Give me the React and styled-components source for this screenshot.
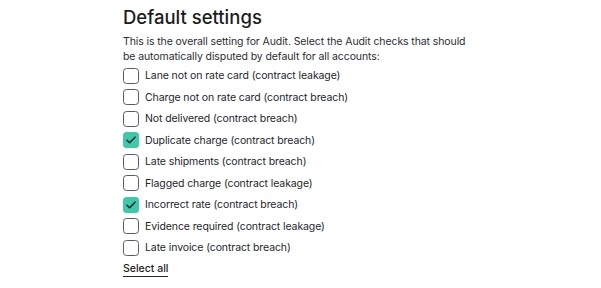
import React, { useState } from 'react';
import styled, { createGlobalStyle } from 'styled-components';

const GlobalStyle = createGlobalStyle`
  html, body {
    margin: 0;
    padding: 0;
    background: #fff;
  }
  body {
    font-family: Inter, "Noto Sans", sans-serif;
    color: #1f2328;
  }
`;

const Section = styled.section`
  width: 355px;
  margin: 0 auto;
  padding-top: 5px;
`;

const Title = styled.h2`
  margin: 0 0 6px;
  font-size: 18.5px;
  font-weight: 500;
  letter-spacing: 0;
  line-height: 24px;
  color: #1b1d21;
`;

const Intro = styled.p`
  margin: 0 0 1px;
  font-size: 10.5px;
  line-height: 14.5px;
  letter-spacing: -0.1px;
  color: #2a2d33;
`;

const CheckList = styled.ul`
  list-style: none;
  margin: 0;
  padding: 0;
  display: flex;
  flex-direction: column;
`;

const Row = styled.li`
  display: flex;
  align-items: center;
  gap: 6px;
  height: 21.5px;
  font-size: 10.5px;
  letter-spacing: -0.1px;
  color: #23262b;
  cursor: pointer;
`;

const Box = styled.span`
  box-sizing: border-box;
  width: 16px;
  height: 16px;
  border-radius: 3.5px;
  border: ${p => (p.$checked ? 'none' : '1.5px solid #535c73')};
  background: ${p => (p.$checked ? '#3fc9a8' : '#fff')};
  display: flex;
  align-items: center;
  justify-content: center;
  flex-shrink: 0;
`;

const SelectAll = styled.button`
  display: block;
  margin-top: 3px;
  padding: 0 0 1px;
  border: none;
  border-bottom: 1px solid #23262b;
  background: none;
  font-family: inherit;
  font-size: 10.5px;
  line-height: 13px;
  font-weight: 500;
  letter-spacing: 0;
  color: #1b1d21;
  cursor: pointer;
`;

const checks = [
  { label: 'Lane not on rate card (contract leakage)', checked: false },
  { label: 'Charge not on rate card (contract breach)', checked: false },
  { label: 'Not delivered (contract breach)', checked: false },
  { label: 'Duplicate charge (contract breach)', checked: true },
  { label: 'Late shipments (contract breach)', checked: false },
  { label: 'Flagged charge (contract leakage)', checked: false },
  { label: 'Incorrect rate (contract breach)', checked: true },
  { label: 'Evidence required (contract leakage)', checked: false },
  { label: 'Late invoice (contract breach)', checked: false },
];

const Check = () => (
  <svg width="12" height="12" viewBox="0 0 12 12" fill="none">
    <path d="M2 6.2 4.6 8.8 10 3.2" stroke="#1c2b3a" strokeWidth="1.6" strokeLinecap="round" strokeLinejoin="round" />
  </svg>
);

const App = () => {
  const [items, setItems] = useState(checks);
  const toggle = i => setItems(items.map((it, j) => (j === i ? { ...it, checked: !it.checked } : it)));

  return (
    <>
      <GlobalStyle />
      <Section>
        <Title>Default settings</Title>
        <Intro>
          This is the overall setting for Audit. Select the Audit checks that should be automatically disputed by
          default for all accounts:
        </Intro>
        <CheckList>
          {items.map((it, i) => (
            <Row key={it.label} onClick={() => toggle(i)}>
              <Box $checked={it.checked}>{it.checked && <Check />}</Box>
              {it.label}
            </Row>
          ))}
        </CheckList>
        <SelectAll onClick={() => setItems(items.map(it => ({ ...it, checked: true })))}>Select all</SelectAll>
      </Section>
    </>
  );
};

export default App;
